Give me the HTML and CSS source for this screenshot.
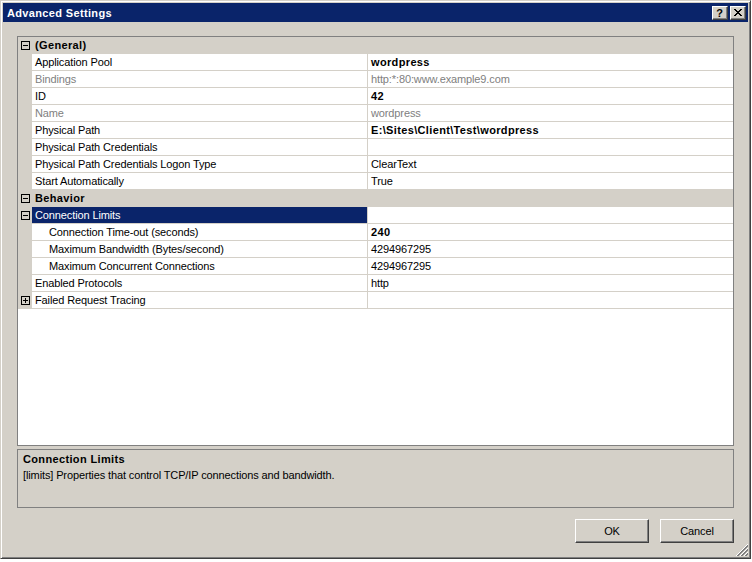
FILE: index.html
```html
<!DOCTYPE html>
<html>
<head>
<meta charset="utf-8">
<title>Advanced Settings</title>
<link rel="stylesheet" href="styles.css">
</head>
<body>
<div class="window">
  <div class="titlebar">
    <span class="title">Advanced Settings</span>
    <div class="tb-buttons">
      <div class="tb-btn help">?</div>
      <div class="tb-btn close">
        <svg width="8" height="7" viewBox="0 0 8 7"><path fill="#000" d="M0 0h2v1H0zM6 0h2v1H6zM1 1h2v1H1zM5 1h2v1H5zM2 2h4v1H2zM3 3h2v1H3zM2 4h4v1H2zM1 5h2v1H1zM5 5h2v1H5zM0 6h2v1H0zM6 6h2v1H6z"/></svg>
      </div>
    </div>
  </div>
  <div class="content">
    <div class="grid">
      <div class="row cat">
        <div class="margin"><svg class="box" width="9" height="9" viewBox="0 0 9 9"><rect x="0.5" y="0.5" width="8" height="8" fill="none" stroke="#000"/><path d="M2 4.5h5" stroke="#000"/></svg></div>
        <div class="label">(General)</div>
      </div>
      <div class="row"><div class="margin"></div><div class="label">Application Pool</div><div class="value bold">wordpress</div></div>
      <div class="row dis"><div class="margin"></div><div class="label">Bindings</div><div class="value">http:*:80:www.example9.com</div></div>
      <div class="row"><div class="margin"></div><div class="label">ID</div><div class="value bold">42</div></div>
      <div class="row dis"><div class="margin"></div><div class="label">Name</div><div class="value">wordpress</div></div>
      <div class="row"><div class="margin"></div><div class="label">Physical Path</div><div class="value bold">E:\Sites\Client\Test\wordpress</div></div>
      <div class="row"><div class="margin"></div><div class="label">Physical Path Credentials</div><div class="value"></div></div>
      <div class="row"><div class="margin"></div><div class="label">Physical Path Credentials Logon Type</div><div class="value">ClearText</div></div>
      <div class="row"><div class="margin"></div><div class="label">Start Automatically</div><div class="value">True</div></div>
      <div class="row cat">
        <div class="margin"><svg class="box" width="9" height="9" viewBox="0 0 9 9"><rect x="0.5" y="0.5" width="8" height="8" fill="none" stroke="#000"/><path d="M2 4.5h5" stroke="#000"/></svg></div>
        <div class="label">Behavior</div>
      </div>
      <div class="row sel">
        <div class="margin"><svg class="box" width="9" height="9" viewBox="0 0 9 9"><rect x="0.5" y="0.5" width="8" height="8" fill="none" stroke="#000"/><path d="M2 4.5h5" stroke="#000"/></svg></div>
        <div class="label">Connection Limits</div><div class="value"></div>
      </div>
      <div class="row sub"><div class="margin"></div><div class="label">Connection Time-out (seconds)</div><div class="value bold">240</div></div>
      <div class="row sub"><div class="margin"></div><div class="label">Maximum Bandwidth (Bytes/second)</div><div class="value">4294967295</div></div>
      <div class="row sub"><div class="margin"></div><div class="label">Maximum Concurrent Connections</div><div class="value">4294967295</div></div>
      <div class="row"><div class="margin"></div><div class="label">Enabled Protocols</div><div class="value">http</div></div>
      <div class="row">
        <div class="margin"><svg class="box" width="9" height="9" viewBox="0 0 9 9"><rect x="0.5" y="0.5" width="8" height="8" fill="none" stroke="#000"/><path d="M2 4.5h5M4.5 2v5" stroke="#000"/></svg></div>
        <div class="label">Failed Request Tracing</div><div class="value"></div>
      </div>
    </div>
    <div class="desc">
      <div class="desc-title">Connection Limits</div>
      <div class="desc-text">[limits] Properties that control TCP/IP connections and bandwidth.</div>
    </div>
    <div class="actions">
      <button class="btn">OK</button>
      <button class="btn">Cancel</button>
    </div>
  </div>
  <svg class="grip" width="12" height="12" viewBox="0 0 12 12">
    <path d="M12 0L0 12M12 4L4 12M12 8L8 12" stroke="#fff"/>
    <path d="M12 1L1 12M12 2L2 12M12 5L5 12M12 6L6 12M12 9L9 12M12 10L10 12" stroke="#808080"/>
  </svg>
</div>
</body>
</html>
```
FILE: styles.css
```css
html, body {
  margin: 0;
  padding: 0;
  background: #ffffff;
}
body {
  font-family: "Liberation Sans", Arial, sans-serif;
  font-size: 11px;
  letter-spacing: -0.12px;
  color: #000;
}
.window {
  position: relative;
  width: 751px;
  height: 559px;
  box-sizing: border-box;
  background: #d4d0c8;
  border: 1px solid;
  border-color: #d4d0c8 #404040 #404040 #d4d0c8;
  box-shadow: inset 1px 1px #ffffff, inset -1px -1px #808080;
  padding: 2px;
  display: flex;
  flex-direction: column;
}
.titlebar {
  height: 19px;
  flex: none;
  background: #0a246a;
  display: flex;
  align-items: center;
  padding-left: 4px;
  color: #fff;
}
.title {
  font-weight: bold;
  font-size: 11px;
  letter-spacing: 0.35px;
}
.tb-buttons {
  margin-left: auto;
  display: flex;
  gap: 2px;
  padding-right: 2px;
}
.tb-btn {
  width: 16px;
  height: 14px;
  box-sizing: border-box;
  background: #d4d0c8;
  border: 1px solid;
  border-color: #ffffff #404040 #404040 #ffffff;
  box-shadow: inset -1px -1px #808080;
  display: flex;
  align-items: center;
  justify-content: center;
  color: #000;
}
.tb-btn.help {
  font-weight: bold;
  font-size: 11px;
  line-height: 12px;
  padding-right: 1px;
}
.tb-btn.close svg {
  display: block;
  margin-right: 1px;
}
.content {
  flex: 1;
  display: flex;
  flex-direction: column;
  padding: 14px 14px 0 14px;
}
.grid {
  height: 410px;
  box-sizing: border-box;
  border: 1px solid #808080;
  background: #ffffff;
  flex: none;
}
.row {
  display: flex;
  height: 17px;
  background: #d4d0c8;
}
.margin {
  width: 14px;
  flex: none;
  display: flex;
  align-items: flex-start;
  padding-left: 3px;
  box-sizing: border-box;
}
.box {
  display: block;
  margin-top: 4px;
}
.label {
  width: 335px;
  flex: none;
  height: 16px;
  line-height: 16px;
  background: #fff;
  padding-left: 3px;
  box-sizing: border-box;
  white-space: nowrap;
  overflow: hidden;
}
.value {
  flex: 1;
  height: 16px;
  line-height: 16px;
  margin-left: 1px;
  background: #fff;
  padding-left: 3px;
  white-space: nowrap;
}
.row.cat .label {
  background: transparent;
  font-weight: bold;
  letter-spacing: 0.35px;
  flex: 1;
}
.row.dis .label,
.row.dis .value {
  color: #808080;
}
.row.sel .label {
  background: #0a246a;
  color: #fff;
}
.row.sub .label {
  padding-left: 17px;
}
.bold {
  font-weight: bold;
  letter-spacing: 0.35px;
}
.desc {
  margin-top: 3px;
  height: 59px;
  box-sizing: border-box;
  border: 1px solid #808080;
  padding: 1px 5px 0 5px;
  line-height: 16px;
  flex: none;
}
.desc-title {
  font-weight: bold;
  letter-spacing: 0.35px;
}
.actions {
  margin-top: 11px;
  display: flex;
  justify-content: flex-end;
  gap: 11px;
}
.btn {
  width: 74px;
  height: 24px;
  box-sizing: border-box;
  background: #d4d0c8;
  border: 1px solid;
  border-color: #ffffff #404040 #404040 #ffffff;
  box-shadow: inset -1px -1px #808080;
  font-family: "Liberation Sans", Arial, sans-serif;
  font-size: 11px;
  letter-spacing: -0.12px;
  color: #000;
  padding: 0;
  margin: 0;
}
.grip {
  position: absolute;
  right: 2px;
  bottom: 2px;
}
```
